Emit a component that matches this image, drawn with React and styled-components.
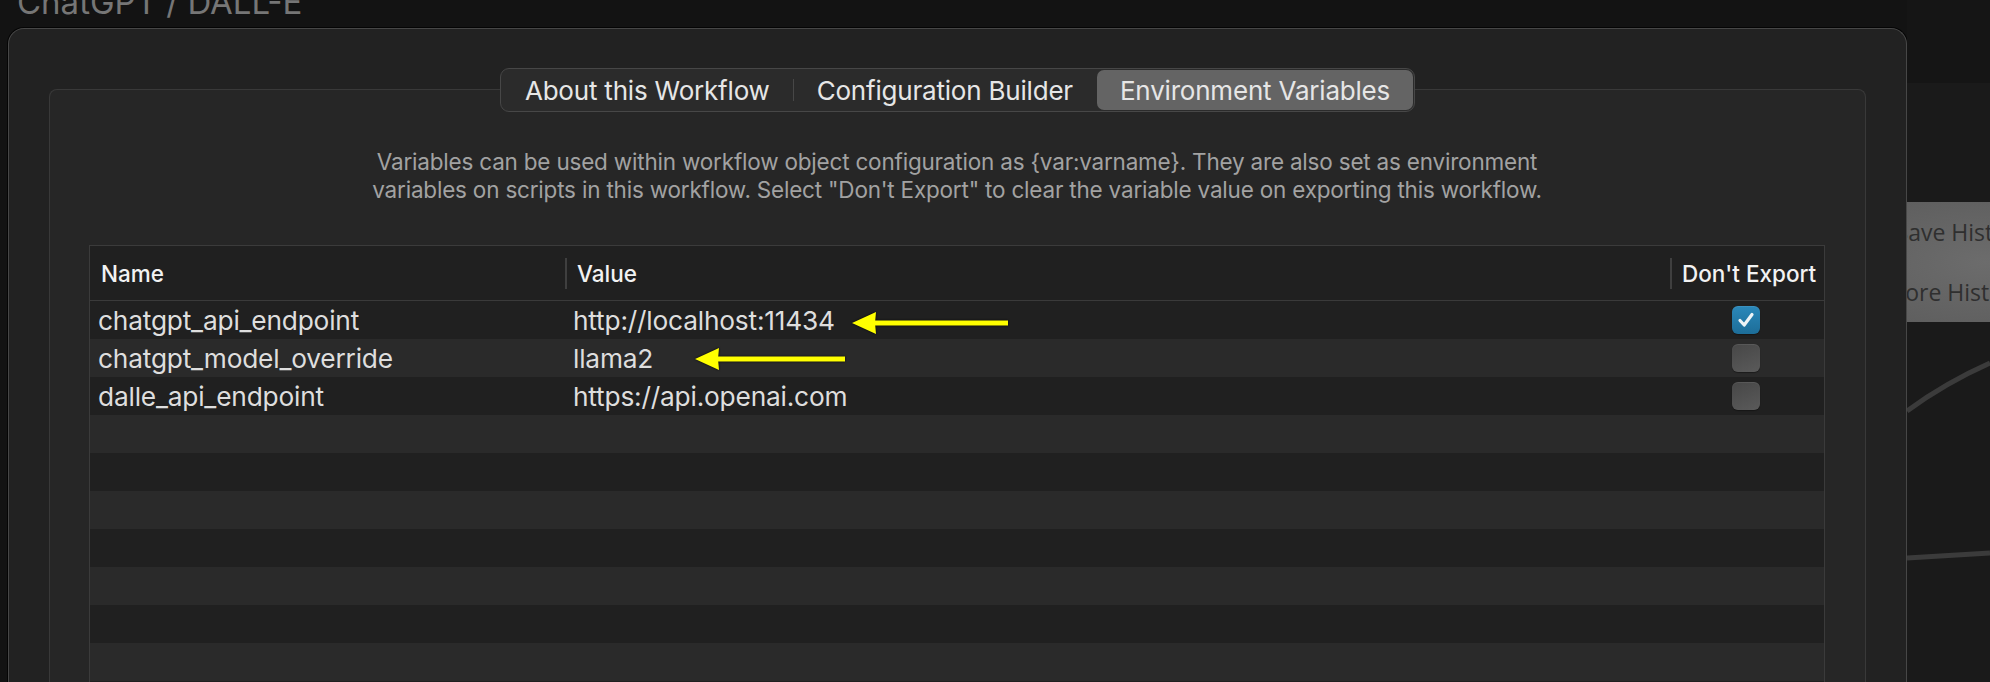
import React from "react";
import styled, { createGlobalStyle } from "styled-components";

const GlobalStyle = createGlobalStyle`
  html, body {
    margin: 0;
    padding: 0;
    background: #131313;
    overflow: hidden;
  }
  body {
    font-family: Inter, "Noto Sans", sans-serif;
    -webkit-font-smoothing: antialiased;
  }
`;

const Page = styled.div`
  display: flex;
  width: 1990px;
  height: 682px;
  overflow: hidden;
  background: #131313;
`;

const Sheet = styled.div`
  display: flex;
  flex-direction: column;
  flex-shrink: 0;
  width: 1899px;
  min-height: 0;
  padding-left: 8px;
`;

const TitleBar = styled.div`
  flex-shrink: 0;
  height: 28px;
  overflow: hidden;
  padding-left: 9px;
`;

const Title = styled.div`
  margin-top: -14px;
  font-size: 33px;
  line-height: 33px;
  color: #767676;
`;

const Panel = styled.div`
  flex: 1;
  min-height: 0;
  overflow: hidden;
  display: flex;
  flex-direction: column;
  box-sizing: border-box;
  padding: 0 40px;
  background: #222222;
  border: 1px solid #474747;
  border-bottom: none;
  border-radius: 16px 16px 0 0;
  box-shadow: 0 0 0 1px #050505;
`;

const TabRow = styled.div`
  flex-shrink: 0;
  display: flex;
  justify-content: center;
  margin-top: 39px;
  position: relative;
  z-index: 1;
`;

const TabBar = styled.div`
  display: flex;
  align-items: center;
  height: 44px;
  box-sizing: border-box;
  padding: 1px;
  background: #2b2b2b;
  border: 1px solid #474747;
  border-radius: 9px;
`;

const Tab = styled.div`
  display: flex;
  align-items: center;
  height: 40px;
  padding: 0 23px;
  border-radius: 7px;
  font-size: 26px;
  letter-spacing: -0.2px;
  color: #e6e6e6;
  background: ${(p) => (p.$active ? "#646464" : "transparent")};
`;

const TabDivider = styled.div`
  width: 1px;
  height: 22px;
  background: ${(p) => (p.$hidden ? "transparent" : "#474747")};
`;

const GroupBox = styled.div`
  flex: 1;
  flex-shrink: 0;
  margin-top: -23px;
  padding: 58px 40px 0 39px;
  background: #262626;
  border: 1px solid #393939;
  border-bottom: none;
  border-radius: 8px 8px 0 0;
`;

const Description = styled.p`
  margin: 0 0 41px;
  text-align: center;
  font-size: 22.5px;
  line-height: 28px;
  color: #a2a2a2;
  letter-spacing: -0.2px;
`;

const Table = styled.div`
  position: relative;
  background: #202020;
  border: 1px solid #3b3b3b;
  border-bottom: none;
`;

const columns = "475px 1105px 1fr";

const HeaderRow = styled.div`
  display: grid;
  grid-template-columns: ${columns};
  height: 54px;
  background: #202020;
  border-bottom: 1px solid #3a3a3a;
`;

const HeaderCell = styled.div`
  position: relative;
  display: flex;
  align-items: center;
  padding-left: ${(p) => (p.$divider ? "12px" : "11px")};
  font-size: 22.5px;
  font-weight: 500;
  color: #f2f2f2;

  &::before {
    content: "";
    display: ${(p) => (p.$divider ? "block" : "none")};
    position: absolute;
    left: 0;
    top: 12px;
    width: 2px;
    height: 31px;
    background: #3f3f3f;
  }
`;

const Row = styled.div`
  display: grid;
  grid-template-columns: ${columns};
  height: 38px;
  background: ${(p) => (p.$alt ? "#2a2a2a" : "#202020")};
`;

const Cell = styled.div`
  display: flex;
  align-items: center;
  justify-content: ${(p) => (p.$center ? "center" : "flex-start")};
  padding-left: ${(p) => (p.$center ? "0" : "8px")};
  padding-right: ${(p) => (p.$center ? "2px" : "0")};
  font-size: 26.3px;
  letter-spacing: -0.2px;
  color: #dedede;
  white-space: nowrap;
`;

const Check = styled.span`
  display: inline-flex;
  align-items: center;
  justify-content: center;
  width: 28px;
  height: 28px;
  border-radius: 6px;
  box-sizing: border-box;
  background: ${(p) =>
    p.$checked
      ? "linear-gradient(180deg, #2b88ba 0%, #1d6d98 100%)"
      : "linear-gradient(160deg, #474747 0%, #5a5a5a 100%)"};
  box-shadow: inset 0 1px 0 rgba(255, 255, 255, 0.08), 0 1px 1px rgba(0, 0, 0, 0.35);
`;

const Arrow = styled.svg`
  position: absolute;
  left: ${(p) => p.$x}px;
  top: ${(p) => p.$y}px;
  filter: drop-shadow(0 0 1px rgba(0, 0, 0, 0.9));
`;

const CanvasPane = styled.div`
  flex: 1;
  display: flex;
  flex-direction: column;
  overflow: hidden;
  background: #151515;
`;

const Canvas = styled.div`
  position: relative;
  flex: 1;
  margin-top: 83px;
  background: #1a1a1a;
`;

const MenuBox = styled.div`
  display: flex;
  flex-direction: column;
  width: 228px;
  margin: 119px 0 0 -58px;
  background: radial-gradient(ellipse at 60% 50%, #6c6c6c 0%, #5c5c5c 100%);
`;

const MenuItem = styled.div`
  height: 60px;
  display: flex;
  align-items: center;
  justify-content: flex-end;
  padding-right: ${(p) => p.$pad}px;
  font-family: "Open Sans", sans-serif;
  font-size: 23px;
  color: #2f2f2f;
  white-space: nowrap;
`;

const Wires = styled.svg`
  position: absolute;
  left: 0;
  top: 0;
  width: 100%;
  height: 100%;
`;

function YellowArrow({ x, y, length }) {
  return (
    <Arrow $x={x} $y={y} width={length} height="24" viewBox={`0 0 ${length} 24`}>
      <polygon points="0,12 24,1 23,12 24,23" fill="#ffff00" />
      <rect x="22" y="9.5" width={length - 22} height="5" fill="#ffff00" />
    </Arrow>
  );
}

const variables = [
  { name: "chatgpt_api_endpoint", value: "http://localhost:11434", noExport: true },
  { name: "chatgpt_model_override", value: "llama2", noExport: false },
  { name: "dalle_api_endpoint", value: "https://api.openai.com", noExport: false },
];

const tabs = ["About this Workflow", "Configuration Builder", "Environment Variables"];
const activeTab = 2;

export default function App() {
  const rows = [...variables];
  while (rows.length < 11) rows.push(null);

  return (
    <>
      <GlobalStyle />
      <Page>
        <Sheet>
          <TitleBar>
            <Title>ChatGPT / DALL-E</Title>
          </TitleBar>
          <Panel>
            <TabRow>
              <TabBar>
                {tabs.map((t, i) => (
                  <React.Fragment key={t}>
                    {i > 0 && <TabDivider $hidden={i === activeTab || i - 1 === activeTab} />}
                    <Tab $active={i === activeTab}>{t}</Tab>
                  </React.Fragment>
                ))}
              </TabBar>
            </TabRow>
            <GroupBox>
              <Description>
                Variables can be used within workflow object configuration as {"{var:varname}"}. They are also set as environment
                <br />
                variables on scripts in this workflow. Select "Don't Export" to clear the variable value on exporting this workflow.
              </Description>
              <Table>
                <HeaderRow>
                  <HeaderCell>Name</HeaderCell>
                  <HeaderCell $divider>Value</HeaderCell>
                  <HeaderCell $divider>Don't Export</HeaderCell>
                </HeaderRow>
                {rows.map((r, i) => (
                  <Row key={i} $alt={i % 2 === 1}>
                    <Cell>{r ? r.name : ""}</Cell>
                    <Cell>{r ? r.value : ""}</Cell>
                    <Cell $center>
                      {r && (
                        <Check $checked={r.noExport}>
                          {r.noExport && (
                            <svg width="20" height="20" viewBox="0 0 20 20">
                              <path
                                d="M4 10.5 L8.2 15 L16 4.5"
                                fill="none"
                                stroke="#eef3f6"
                                strokeWidth="3.2"
                                strokeLinecap="round"
                                strokeLinejoin="round"
                              />
                            </svg>
                          )}
                        </Check>
                      )}
                    </Cell>
                  </Row>
                ))}
                <YellowArrow x={762} y={65} length={156} />
                <YellowArrow x={605} y={101} length={150} />
              </Table>
            </GroupBox>
          </Panel>
        </Sheet>
        <CanvasPane>
          <Canvas>
            <MenuBox>
              <MenuItem $pad={49}>Save History</MenuItem>
              <MenuItem $pad={53}>Restore History</MenuItem>
            </MenuBox>
            <Wires>
              <path d="M0 328 Q 38 300 83 280" fill="none" stroke="#3b3b3b" strokeWidth="5" />
              <path d="M0 475 L 83 470" fill="none" stroke="#3b3b3b" strokeWidth="5" />
            </Wires>
          </Canvas>
        </CanvasPane>
      </Page>
    </>
  );
}
